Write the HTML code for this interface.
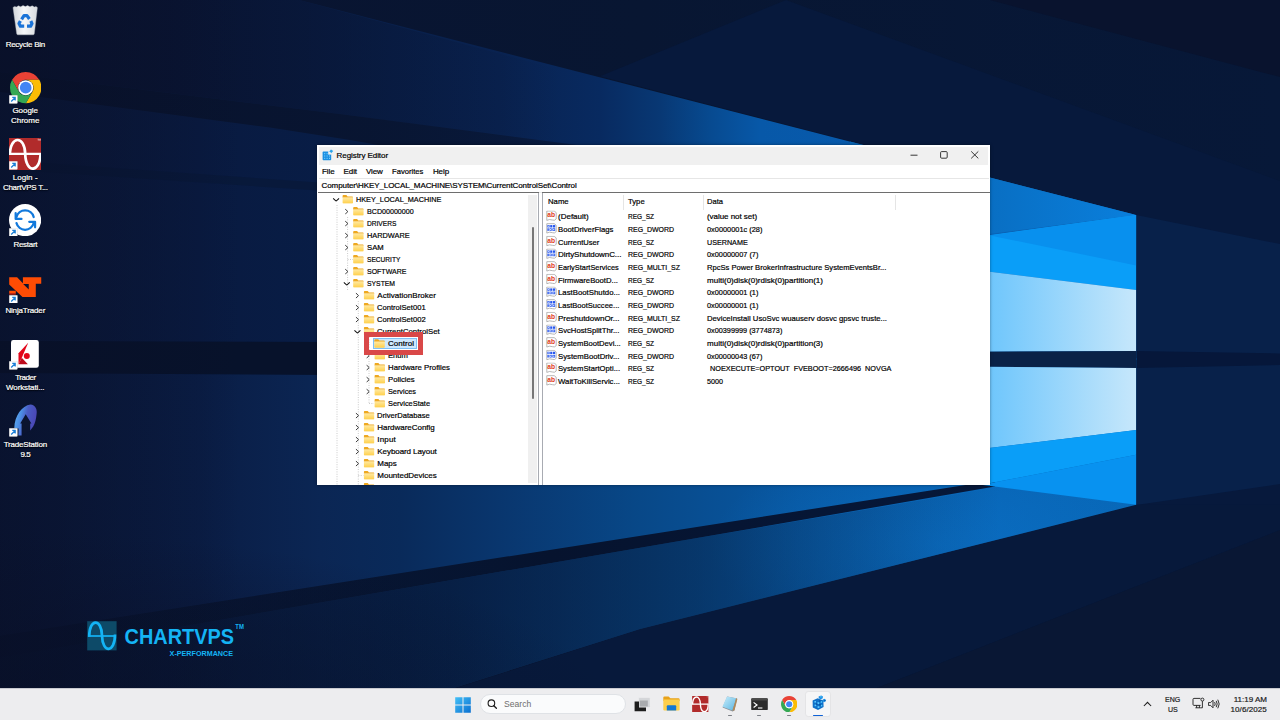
<!DOCTYPE html>
<html lang="en"><head><meta charset="utf-8"><title>Registry Editor</title>
<style>
html,body{margin:0;padding:0;background:#0a1430;}
body{width:1280px;height:720px;overflow:hidden;font-family:"Liberation Sans",sans-serif;}
#screen{position:relative;width:1280px;height:720px;overflow:hidden;background:#0a1430;}
.abs{position:absolute;}
#wall{position:absolute;left:0;top:0;}
.dicon{position:absolute;left:0;width:50px;text-align:center;color:#fff;font-size:8px;line-height:9.8px;text-shadow:0 1px 2px rgba(0,0,0,.9),0 0 2px rgba(0,0,0,.7);white-space:nowrap;}
.dicon span{display:block;}
.t{position:absolute;white-space:pre;color:#000;font-size:8px;line-height:10px;-webkit-text-stroke:0.2px currentColor;}
#win{position:absolute;left:317px;top:145px;width:673px;height:340px;background:#fff;overflow:hidden;border:0;box-shadow:0 0 3px rgba(0,0,0,.4);}
.dl{-webkit-text-stroke:0.2px #fff;position:absolute;white-space:nowrap;color:#fff;font-size:8px;line-height:10px;text-shadow:0 0.7px 1.2px rgba(0,0,0,.95),0 0 1.5px rgba(0,0,0,.8);}

</style></head>
<body>
<div id="screen">
<svg id="wall" width="1280" height="720" viewBox="0 0 1280 720">
<defs>
<linearGradient id="gbase" gradientUnits="userSpaceOnUse" x1="0" y1="0" x2="1280" y2="0"><stop offset="0" stop-color="#091330"/><stop offset="0.5" stop-color="#081632"/><stop offset="1" stop-color="#071838"/></linearGradient>
<linearGradient id="gupper" gradientUnits="userSpaceOnUse" x1="0" y1="0" x2="1136" y2="0"><stop offset="0.0000" stop-color="#0a193c"/><stop offset="0.1761" stop-color="#091a40"/><stop offset="0.2817" stop-color="#081d46"/><stop offset="0.4401" stop-color="#092250"/><stop offset="0.5282" stop-color="#082a60"/><stop offset="0.5810" stop-color="#083874"/><stop offset="0.6250" stop-color="#074a90"/><stop offset="0.6690" stop-color="#0758a8"/><stop offset="0.7570" stop-color="#085aac"/><stop offset="1.0000" stop-color="#0a6cc0"/></linearGradient>
<linearGradient id="glower" gradientUnits="userSpaceOnUse" x1="0" y1="0" x2="1136" y2="0"><stop offset="0.0000" stop-color="#0a193d"/><stop offset="0.1761" stop-color="#0a1d45"/><stop offset="0.2817" stop-color="#0b2654"/><stop offset="0.3521" stop-color="#092a5a"/><stop offset="0.4401" stop-color="#09366e"/><stop offset="0.5634" stop-color="#084888"/><stop offset="0.7042" stop-color="#0858a2"/><stop offset="0.8803" stop-color="#0864b4"/><stop offset="1.0000" stop-color="#0868b8"/></linearGradient>
<linearGradient id="gtri" gradientUnits="userSpaceOnUse" x1="900" y1="0" x2="1136" y2="0"><stop offset="0" stop-color="#0865b4"/><stop offset="1" stop-color="#0a7fdc"/></linearGradient>
<linearGradient id="glight" gradientUnits="userSpaceOnUse" x1="940" y1="0" x2="1136" y2="0"><stop offset="0" stop-color="#55bbfb"/><stop offset="0.3" stop-color="#74c8fc"/><stop offset="1" stop-color="#c6e7fb"/></linearGradient>
<linearGradient id="gdarkr" gradientUnits="userSpaceOnUse" x1="0" y1="0" x2="1280" y2="0"><stop offset="0" stop-color="#0a1836"/><stop offset="0.5" stop-color="#08193a"/><stop offset="1" stop-color="#07173a"/></linearGradient>
<linearGradient id="gtopfade" gradientUnits="userSpaceOnUse" x1="0" y1="0" x2="560" y2="0"><stop offset="0" stop-color="#091330" stop-opacity="1"/><stop offset="0.3" stop-color="#091330" stop-opacity="0.9"/><stop offset="1" stop-color="#091634" stop-opacity="0"/></linearGradient>
<linearGradient id="gstripe" gradientUnits="userSpaceOnUse" x1="0" y1="0" x2="600" y2="0"><stop offset="0" stop-color="#08122c" stop-opacity="1"/><stop offset="0.6" stop-color="#08142f" stop-opacity="0.9"/><stop offset="1" stop-color="#08142f" stop-opacity="0.5"/></linearGradient>
<linearGradient id="gblfade" gradientUnits="userSpaceOnUse" x1="0" y1="0" x2="1000" y2="0"><stop offset="0" stop-color="#071430" stop-opacity="0.5"/><stop offset="0.45" stop-color="#061532" stop-opacity="0.62"/><stop offset="0.7" stop-color="#061836" stop-opacity="0.42"/><stop offset="1" stop-color="#061836" stop-opacity="0"/></linearGradient>
<radialGradient id="gglow1" gradientUnits="userSpaceOnUse" cx="940" cy="545" r="230" gradientTransform="translate(940 545) scale(1 0.45) rotate(-14) translate(-940 -545)"><stop offset="0" stop-color="#0c74cc" stop-opacity="0.55"/><stop offset="1" stop-color="#0c74cc" stop-opacity="0"/></radialGradient>
<clipPath id="clow"><polygon points="0,358 1136.2,358 1136.2,504.8 640,629 454,688 300,740 0,740"/></clipPath>
<linearGradient id="gfstripe" gradientUnits="userSpaceOnUse" x1="0" y1="0" x2="1000" y2="0"><stop offset="0" stop-color="#061028" stop-opacity="0.5"/><stop offset="0.3" stop-color="#06112a" stop-opacity="0.8"/><stop offset="0.55" stop-color="#06132e" stop-opacity="1"/><stop offset="1" stop-color="#06183a" stop-opacity="1"/></linearGradient>
<linearGradient id="gvigl" gradientUnits="userSpaceOnUse" x1="0" y1="0" x2="240" y2="0"><stop offset="0" stop-color="#090f26" stop-opacity="0.62"/><stop offset="0.25" stop-color="#090f26" stop-opacity="0.5"/><stop offset="1" stop-color="#090f26" stop-opacity="0"/></linearGradient>
<radialGradient id="gvigb" gradientUnits="userSpaceOnUse" cx="0" cy="0" r="1" gradientTransform="translate(0 720) scale(620 190)"><stop offset="0" stop-color="#090f26" stop-opacity="0.55"/><stop offset="0.5" stop-color="#090f26" stop-opacity="0.35"/><stop offset="1" stop-color="#090f26" stop-opacity="0"/></radialGradient>
<clipPath id="cpane"><polygon points="850,141.49 1136.2,215 1136.2,504.8 850,467.88"/></clipPath>
</defs>
<rect width="1280" height="720" fill="url(#gbase)"/>
<polygon points="600,76.2774 786,0 1280,181 1280,560 1136.2,560 1136.2,215" fill="#07193c"/>
<polygon points="990,0 1280,0 1280,77" fill="#09132e"/>
<polygon points="1136.2,215 1280,244 1280,484 1136.2,505" fill="#08214a"/>
<polygon points="1136.2,351 1280,353.5 1280,365 1136.2,368" fill="#06173a"/>
<polygon points="1136.2,504.8 1280,504.8 1280,530 872,690 450,690 640,629" fill="#07193b"/>
<polygon points="1280,530 872,690 1280,690" fill="#091734"/>
<polygon points="0,-76.8322 1136.2,215 1136.2,360 0,360" fill="url(#gupper)"/>
<polygon points="0,358 1136.2,358 1136.2,504.8 640,629 454,688 300,740 0,740" fill="url(#glower)"/>
<rect x="600" y="400" width="540" height="300" fill="url(#gglow1)" clip-path="url(#clow)"/>
<polygon points="0,657.8 350,597.6 700,537.4 1000,487 1000,538.9 640,629 454,688 300,740 0,740" fill="url(#gblfade)"/>
<polygon points="0,-80 600,80.5 600,148 580,146 340,114 40,77 0,72" fill="url(#gtopfade)"/>
<polygon points="0,72 40,77 340,114 600,148 395,148 350,140 270,127.5 40,97 0,92" fill="url(#gstripe)"/>
<polygon points="0,160 340,184 340,192 0,169" fill="#091837" opacity="0.7"/>
<polygon points="0,341 330,342 330,375 0,373" fill="#07122b"/>
<polygon points="995,481 972,484 700,526.5 350,581 0,635.7 0,657.8 350,597.6 700,537.4 995,486.6" fill="url(#gfstripe)"/>
<rect x="0" y="0" width="240" height="720" fill="url(#gvigl)"/>
<rect x="0" y="520" width="640" height="200" fill="url(#gvigb)"/>
<g clip-path="url(#cpane)">
<polygon points="850,100 1136.2,215 850,252" fill="url(#gtri)"/>
<polygon points="940,242 1136.2,215 1136.2,290 940,265.5" fill="#0a9ef8"/>
<polygon points="990,235.5 1136.2,215 1136.2,265.4" fill="#0890ee"/>
<polygon points="940,265.5 1136.2,290 1136.2,351 940,352" fill="url(#glight)"/>
<polygon points="940,352 1136.2,351 1136.2,368 940,366.5" fill="#0a2247"/>
<polygon points="940,366.5 1136.2,368 1136.2,430 940,454" fill="url(#glight)"/>
<polygon points="940,454 1136.2,430 1136.2,454.7 940,493" fill="#0a9ef8"/>
<polygon points="940,493 1136.2,454.7 1136.2,520 940,520" fill="#0892f0"/>
</g>
</svg>
<svg class="abs" style="left:11px;top:4px" width="29" height="33" viewBox="0 0 29 33">
<defs><linearGradient id="gbin" x1="0" y1="0" x2="1" y2="0"><stop offset="0" stop-color="#d2d6da"/><stop offset="0.45" stop-color="#f6f7f9"/><stop offset="1" stop-color="#d6dade"/></linearGradient></defs>
<path d="M2 3.4L3.6 2.4L5.4 3L7.4 1.8L9.6 2.8L12 1.6L14.4 2.6L16.6 1.6L19 2.8L21.2 1.8L23.4 3L25 2.4L26.4 3.6L23.3 29.8Q23.2 30.8 22 30.8H7Q5.8 30.8 5.7 29.8Z" fill="url(#gbin)" stroke="#b9bec4" stroke-width="0.4"/>
<g fill="none" stroke="#1a73d8" stroke-width="3.2" stroke-linejoin="round"><path d="M10.6 15.4L13 11.6H16L18.4 15"/><path d="M19.8 17L21 19.6L19.6 22.2H16"/><path d="M13.2 22.2H9.4L8 19.6L9.4 17"/></g>
</svg>
<span class="dl" style="left:5.63px;top:39.50px;width:41.40px;letter-spacing:-0.258px">Recycle Bin</span>
<svg width="0" height="0" style="position:absolute"><defs><symbol id="chrome" viewBox="-50 -50 100 100">
<path d="M-43.3 -25A50 50 0 0 1 43.3 -25L0 -25A25 25 0 0 0 -21.65 12.5Z" fill="#e94235"/>
<path d="M43.3 -25A50 50 0 0 1 0 50L21.65 12.5A25 25 0 0 0 0 -25Z" fill="#fbbc05"/>
<path d="M0 50A50 50 0 0 1 -43.3 -25L-21.65 12.5A25 25 0 0 0 21.65 12.5Z" fill="#34a853"/>
<circle r="24" fill="#fff"/><circle r="18.6" fill="#4285f4"/></symbol></defs></svg>
<svg class="abs" style="left:9.6px;top:72.4px" width="31.4" height="31.4"><use href="#chrome" width="31.4" height="31.4"/></svg>
<svg class="abs" style="left:9.4px;top:95.1px" width="8.6" height="8.6" viewBox="0 0 9 9"><rect x="0.2" y="0.2" width="8.6" height="8.6" rx="0.6" fill="#fff" stroke="#c8c8c8" stroke-width="0.4"/><path d="M2.3 6.8L6 3.1M3.4 2.6H6.5V5.7" fill="none" stroke="#1b7fd6" stroke-width="1.3"/></svg>
<span class="dl" style="left:12.42px;top:105.50px;width:27.60px;letter-spacing:-0.033px">Google</span>
<span class="dl" style="left:10.89px;top:115.50px;width:30.60px;letter-spacing:0.025px">Chrome</span>
<svg width="0" height="0" style="position:absolute"><defs><symbol id="cvps" viewBox="0 0 32.2 32.2">
<rect width="32.2" height="32.2" fill="#b12b2b"/>
<path d="M0 15.85H32.2" stroke="#fff" stroke-width="2.4" fill="none"/>
<path d="M0.9 16.6C1.2 -2.75 15.8 -2.75 16.2 15.85C16.8 35.8 31.3 35.8 31.6 15" stroke="#fff" stroke-width="2.7" fill="none"/>
<path d="M28.6 1.2H30M29.3 1.2V2.8M30.6 2.8V1.2L31.3 2.2L32 1.2V2.8" stroke="#fff" stroke-width="0.4" fill="none"/>
</symbol></defs></svg>
<svg class="abs" style="left:9.2px;top:137.7px" width="32.2" height="32.2"><use href="#cvps" width="32.2" height="32.2"/></svg>
<svg class="abs" style="left:9.4px;top:161.1px" width="8.6" height="8.6" viewBox="0 0 9 9"><rect x="0.2" y="0.2" width="8.6" height="8.6" rx="0.6" fill="#fff" stroke="#c8c8c8" stroke-width="0.4"/><path d="M2.3 6.8L6 3.1M3.4 2.6H6.5V5.7" fill="none" stroke="#1b7fd6" stroke-width="1.3"/></svg>
<span class="dl" style="left:12.66px;top:172.50px;width:27.00px;letter-spacing:0.077px">Login -</span>
<span class="dl" style="left:2.94px;top:182.50px;width:46.80px;letter-spacing:-0.270px">ChartVPS T...</span>
<svg class="abs" style="left:9.2px;top:204.2px" width="32.2" height="32.2" viewBox="-50 -50 100 100">
<circle r="50" fill="#fff"/>
<g fill="none" stroke="#1279dc" stroke-width="6.9" stroke-linecap="round" stroke-linejoin="round"><path d="M26.7 -9.5A27.6 27.6 0 0 0 -26.7 -9.5"/><path d="M-26.7 9.5A27.6 27.6 0 0 0 26.7 9.5"/>
<path d="M-29.3 -21.6V-3.5H-11.2"/><path d="M31 22.4V5.2H12.9"/></g>
</svg>
<svg class="abs" style="left:9.4px;top:227.8px" width="8.6" height="8.6" viewBox="0 0 9 9"><rect x="0.2" y="0.2" width="8.6" height="8.6" rx="0.6" fill="#fff" stroke="#c8c8c8" stroke-width="0.4"/><path d="M2.3 6.8L6 3.1M3.4 2.6H6.5V5.7" fill="none" stroke="#1b7fd6" stroke-width="1.3"/></svg>
<span class="dl" style="left:13.38px;top:239.50px;width:25.90px;letter-spacing:-0.269px">Restart</span>
<svg class="abs" style="left:9px;top:277px" width="32.6" height="20.4" viewBox="0 0 32.6 20.4">
<path fill-rule="evenodd" d="M0.2 0.2H8.1L13.9 6.25V0.2H32.25V6.7H26.8V20H13.5L0.2 7.5ZM14.2 7H19.75V12.4Z" fill="#fe4c04"/>
<path d="M0.2 13.75H6.8V16.2H0.2Z" fill="#fe4c04"/><path d="M0.2 16.2H6.8V17.6H0.2Z" fill="#e02a10"/>
</svg>
<svg class="abs" style="left:9.4px;top:294.6px" width="8.6" height="8.6" viewBox="0 0 9 9"><rect x="0.2" y="0.2" width="8.6" height="8.6" rx="0.6" fill="#fff" stroke="#c8c8c8" stroke-width="0.4"/><path d="M2.3 6.8L6 3.1M3.4 2.6H6.5V5.7" fill="none" stroke="#1b7fd6" stroke-width="1.3"/></svg>
<span class="dl" style="left:5.38px;top:305.50px;width:41.80px;letter-spacing:-0.154px">NinjaTrader</span>
<svg class="abs" style="left:11.4px;top:340px" width="27.8" height="27.8" viewBox="0 0 27.8 27.8">
<rect width="27.8" height="27.8" rx="2.4" fill="#fff"/>
<path d="M17.2 2.8L7.5 13.3V24.2L10.8 17.8Z" fill="#e2061a"/>
<path d="M7.5 24.2L10.8 17.8L16.9 24.2Z" fill="#bd0a1c"/>
<circle cx="15.8" cy="16.1" r="3" fill="#e2061a"/>
</svg>
<svg class="abs" style="left:9.4px;top:361.1px" width="8.6" height="8.6" viewBox="0 0 9 9"><rect x="0.2" y="0.2" width="8.6" height="8.6" rx="0.6" fill="#fff" stroke="#c8c8c8" stroke-width="0.4"/><path d="M2.3 6.8L6 3.1M3.4 2.6H6.5V5.7" fill="none" stroke="#1b7fd6" stroke-width="1.3"/></svg>
<span class="dl" style="left:15.18px;top:372.50px;width:22.50px;letter-spacing:-0.461px">Trader</span>
<span class="dl" style="left:6.06px;top:382.50px;width:40.40px;letter-spacing:-0.121px">Workstati...</span>
<svg class="abs" style="left:13.6px;top:404.4px" width="24" height="32" viewBox="0 0 24 32">
<defs><linearGradient id="gts" x1="0" y1="0.2" x2="1" y2="0.5"><stop offset="0" stop-color="#5fb0f4"/><stop offset="0.3" stop-color="#4c8ee4"/><stop offset="0.55" stop-color="#4a5cc4"/><stop offset="1" stop-color="#4a44b4"/></linearGradient></defs>
<path d="M0.3 24C0.6 12 8 1.6 16.4 0.6C21.4 1 23.4 5.6 22.6 10C22.2 15 21 19.4 19.2 22.4L16.2 26.4V19H7.6V31.4H4.4L4.6 24.5Z" fill="url(#gts)"/>
<path d="M11.7 10.3L17.4 19.6H15.3V27L8.1 31.4V19.6H6.2Z" fill="#0b1430"/>
</svg>
<svg class="abs" style="left:9.4px;top:428px" width="8.6" height="8.6" viewBox="0 0 9 9"><rect x="0.2" y="0.2" width="8.6" height="8.6" rx="0.6" fill="#fff" stroke="#c8c8c8" stroke-width="0.4"/><path d="M2.3 6.8L6 3.1M3.4 2.6H6.5V5.7" fill="none" stroke="#1b7fd6" stroke-width="1.3"/></svg>
<span class="dl" style="left:3.64px;top:439.50px;width:45.30px;letter-spacing:-0.184px">TradeStation</span>
<span class="dl" style="left:20.39px;top:449.50px;width:12.00px;letter-spacing:-0.373px">9.5</span>
<svg class="abs" style="left:86px;top:620px" width="162" height="40" viewBox="86 620 162 40">
<rect x="87.2" y="621.2" width="29.4" height="29.2" fill="#0d4a68"/>
<path d="M88 636H116" stroke="#14b4f5" stroke-width="1.7" fill="none"/>
<path d="M89.2 636.8C89.2 618 101.6 618 102 635.6C102.4 653.4 115 653.4 115 634.6" stroke="#14b4f5" stroke-width="2.7" fill="none"/>
<text x="124.5" y="644.4" font-family="Liberation Sans, sans-serif" font-weight="bold" font-size="22.6" fill="#14b4f5" textLength="109.5" lengthAdjust="spacingAndGlyphs">CHARTVPS</text>
<text x="235.3" y="628.6" font-family="Liberation Sans, sans-serif" font-weight="bold" font-size="6.6" fill="#14b4f5" textLength="8.6" lengthAdjust="spacingAndGlyphs">TM</text>
<text x="169.6" y="655.6" font-family="Liberation Sans, sans-serif" font-weight="bold" font-size="6.8" fill="#14b4f5" textLength="63.4" lengthAdjust="spacingAndGlyphs">X-PERFORMANCE</text>
</svg>
<svg width="0" height="0" style="position:absolute"><defs>
<linearGradient id="gfold" x1="0" y1="0" x2="0" y2="1"><stop offset="0" stop-color="#ffe9a2"/><stop offset="1" stop-color="#ffcf48"/></linearGradient>
<symbol id="fold" viewBox="0 0 11 9"><path d="M0.3 1.2Q0.3 0.3 1.2 0.3H4.2L5.4 1.6H10Q10.8 1.6 10.8 2.4V3H0.3Z" fill="#eea820"/><path d="M0.3 2.6H10.8V8Q10.8 8.8 10 8.8H1.1Q0.3 8.8 0.3 8Z" fill="url(#gfold)"/></symbol>
<symbol id="chr" viewBox="0 0 4 6"><path d="M0.6 0.4L3.3 3L0.6 5.6" fill="none" stroke="#3a3a3a" stroke-width="1"/></symbol>
<symbol id="chd" viewBox="0 0 7 4"><path d="M0.5 0.5L3.5 3.3L6.5 0.5" fill="none" stroke="#111" stroke-width="1.1"/></symbol>
<symbol id="iab" viewBox="0 0 11 11"><path d="M0.8 0.6H8.2L10.2 2.2V8.6Q8.5 10.6 6.4 9.6Q3.5 8.4 0.8 10Z" fill="#fff" stroke="#9a9a9a" stroke-width="0.7"/><text x="1.2" y="6.9" font-family="Liberation Sans, sans-serif" font-size="6.4" font-weight="bold" fill="#e03a1a" textLength="7.8" lengthAdjust="spacingAndGlyphs">ab</text></symbol>
<symbol id="ibin" viewBox="0 0 11 11"><path d="M0.8 0.6H8.2L10.2 2.2V8.6Q8.5 10.6 6.4 9.6Q3.5 8.4 0.8 10Z" fill="#fff" stroke="#9a9a9a" stroke-width="0.7"/><g fill="#2656ee"><rect x="1.4" y="2" width="2.2" height="2.4"/><rect x="4.2" y="2" width="2.2" height="2.4"/><rect x="7" y="2" width="2.2" height="2.4"/><rect x="1.4" y="5.2" width="1.4" height="2.6"/><rect x="3.5" y="5.2" width="2.2" height="2.6"/><rect x="6.4" y="5.2" width="2.8" height="2.6"/></g><g fill="#fff"><rect x="2.1" y="2.7" width="0.8" height="1"/><rect x="4.2" y="5.9" width="0.8" height="1.2"/><rect x="7.3" y="5.9" width="1" height="1.2"/></g></symbol>
</defs></svg>
<div id="win"><div class="abs" style="left:2px;top:2px;width:669px;height:18px;background:#f0f0f0"></div></div>
<svg class="abs" style="left:322px;top:149px" width="12" height="12" viewBox="0 0 12 12"><rect x="0.6" y="2.6" width="8.6" height="8.6" rx="0.8" fill="#1a8fe3"/><g fill="#8fdcff"><rect x="2.2" y="4.2" width="1" height="1"/><rect x="4.6" y="4.2" width="1" height="1"/><rect x="2.2" y="6.5" width="1" height="1"/><rect x="4.6" y="6.5" width="1" height="1"/><rect x="7" y="6.5" width="1" height="1"/><rect x="2.2" y="8.8" width="1" height="1"/><rect x="4.6" y="8.8" width="1" height="1"/><rect x="7" y="8.8" width="1" height="1"/></g><rect x="6.2" y="2.2" width="3.4" height="3.4" fill="#f0f0f0"/><path d="M9 0.4L11.2 2L9.4 4L7.3 2.4Z" fill="#29a3ea"/></svg>
<span class="t" style="left:336.60px;top:150.50px;letter-spacing:-0.071px;">Registry Editor</span>
<svg class="abs" style="left:905px;top:147px" width="84" height="18" viewBox="905 147 84 18"><g fill="none" stroke="#222" stroke-width="0.9"><path d="M910.5 155.2H917.5"/><rect x="940.6" y="151.6" width="6.6" height="6.6" rx="1"/><path d="M971.2 151.4L978.3 158.4M978.3 151.4L971.2 158.4"/></g></svg>
<span class="t" style="left:322.00px;top:166.50px;letter-spacing:-0.048px;">File</span>
<span class="t" style="left:343.50px;top:166.50px;letter-spacing:-0.071px;">Edit</span>
<span class="t" style="left:366.00px;top:166.50px;letter-spacing:-0.099px;">View</span>
<span class="t" style="left:392.00px;top:166.50px;transform:scaleX(0.9515);transform-origin:0 0;">Favorites</span>
<span class="t" style="left:432.90px;top:166.50px;letter-spacing:-0.088px;">Help</span>
<div class="abs" style="left:319px;top:178px;width:670px;height:1px;background:#e6e6e6"></div>
<span class="t" style="left:321.60px;top:180.50px;letter-spacing:-0.100px;">Computer\HKEY_LOCAL_MACHINE\SYSTEM\CurrentControlSet\Control</span>
<div class="abs" style="left:318px;top:192px;width:672px;height:1px;background:#6e6e6e"></div>
<div class="abs" style="left:527.5px;top:195px;width:9.4px;height:287.5px;background:#f0f0f0"></div>
<div class="abs" style="left:532px;top:227px;width:2px;height:172px;background:#767676;border-radius:1px"></div>
<div class="abs" style="left:538.3px;top:193px;width:1.1px;height:292px;background:#a8abb2"></div>
<div class="abs" style="left:541.7px;top:193px;width:1.1px;height:292px;background:#a8abb2"></div>
<div class="abs" style="left:539.4px;top:192px;width:2.3px;height:1px;background:#e8e8e8"></div>
<svg class="abs" style="left:318px;top:193px" width="210" height="292" viewBox="318 193 210 292">
<g stroke="#b4b4b4" stroke-width="0.7" stroke-dasharray="1 1.4" fill="none">
<path d="M337 205V485"/><path d="M347.6 217V290"/><path d="M358.3 301V485"/><path d="M369 337V404"/>
<path d="M347.6 259.5H353"/><path d="M369 403.5H374"/><path d="M358.3 475.5H363.5"/>
</g>
<use href="#fold" x="342.20" y="194.80" width="11" height="9"/>
<use href="#chd" x="332.60" y="197.80" width="7" height="4"/>
<use href="#fold" x="352.87" y="206.80" width="11" height="9"/>
<use href="#chr" x="344.57" y="208.60" width="4" height="6"/>
<use href="#fold" x="352.87" y="218.80" width="11" height="9"/>
<use href="#chr" x="344.57" y="220.60" width="4" height="6"/>
<use href="#fold" x="352.87" y="230.80" width="11" height="9"/>
<use href="#chr" x="344.57" y="232.60" width="4" height="6"/>
<use href="#fold" x="352.87" y="242.80" width="11" height="9"/>
<use href="#chr" x="344.57" y="244.60" width="4" height="6"/>
<use href="#fold" x="352.87" y="254.80" width="11" height="9"/>
<use href="#fold" x="352.87" y="266.80" width="11" height="9"/>
<use href="#chr" x="344.57" y="268.60" width="4" height="6"/>
<use href="#fold" x="352.87" y="278.80" width="11" height="9"/>
<use href="#chd" x="343.27" y="281.80" width="7" height="4"/>
<use href="#fold" x="363.54" y="290.80" width="11" height="9"/>
<use href="#chr" x="355.24" y="292.60" width="4" height="6"/>
<use href="#fold" x="363.54" y="302.80" width="11" height="9"/>
<use href="#chr" x="355.24" y="304.60" width="4" height="6"/>
<use href="#fold" x="363.54" y="314.80" width="11" height="9"/>
<use href="#chr" x="355.24" y="316.60" width="4" height="6"/>
<use href="#fold" x="363.54" y="326.80" width="11" height="9"/>
<use href="#chd" x="353.94" y="329.80" width="7" height="4"/>
<use href="#fold" x="374.21" y="338.80" width="11" height="9"/>
<use href="#fold" x="374.21" y="350.80" width="11" height="9"/>
<use href="#chr" x="365.91" y="352.60" width="4" height="6"/>
<use href="#fold" x="374.21" y="362.80" width="11" height="9"/>
<use href="#chr" x="365.91" y="364.60" width="4" height="6"/>
<use href="#fold" x="374.21" y="374.80" width="11" height="9"/>
<use href="#chr" x="365.91" y="376.60" width="4" height="6"/>
<use href="#fold" x="374.21" y="386.80" width="11" height="9"/>
<use href="#chr" x="365.91" y="388.60" width="4" height="6"/>
<use href="#fold" x="374.21" y="398.80" width="11" height="9"/>
<use href="#fold" x="363.54" y="410.80" width="11" height="9"/>
<use href="#chr" x="355.24" y="412.60" width="4" height="6"/>
<use href="#fold" x="363.54" y="422.80" width="11" height="9"/>
<use href="#chr" x="355.24" y="424.60" width="4" height="6"/>
<use href="#fold" x="363.54" y="434.80" width="11" height="9"/>
<use href="#chr" x="355.24" y="436.60" width="4" height="6"/>
<use href="#fold" x="363.54" y="446.80" width="11" height="9"/>
<use href="#chr" x="355.24" y="448.60" width="4" height="6"/>
<use href="#fold" x="363.54" y="458.80" width="11" height="9"/>
<use href="#chr" x="355.24" y="460.60" width="4" height="6"/>
<use href="#fold" x="363.54" y="470.80" width="11" height="9"/>
<use href="#fold" x="363.54" y="482.80" width="11" height="9"/>
</svg>
<div class="abs" style="left:372.6px;top:338px;width:44.7px;height:11.3px;box-sizing:border-box;background:#cde8ff;border:1px solid #7fc0f5"></div>
<svg class="abs" style="left:374px;top:339px" width="11" height="9"><use href="#fold" width="11" height="9"/></svg>
<span class="t" style="left:356.00px;top:194.50px;transform:scaleX(0.9097);transform-origin:0 0;">HKEY_LOCAL_MACHINE</span>
<span class="t" style="left:366.67px;top:206.50px;transform:scaleX(0.8892);transform-origin:0 0;">BCD00000000</span>
<span class="t" style="left:366.67px;top:218.50px;transform:scaleX(0.8248);transform-origin:0 0;">DRIVERS</span>
<span class="t" style="left:366.67px;top:230.50px;transform:scaleX(0.9201);transform-origin:0 0;">HARDWARE</span>
<span class="t" style="left:366.67px;top:242.50px;transform:scaleX(0.9614);transform-origin:0 0;">SAM</span>
<span class="t" style="left:366.67px;top:254.50px;transform:scaleX(0.8241);transform-origin:0 0;">SECURITY</span>
<span class="t" style="left:366.67px;top:266.50px;transform:scaleX(0.8734);transform-origin:0 0;">SOFTWARE</span>
<span class="t" style="left:366.67px;top:278.50px;transform:scaleX(0.8512);transform-origin:0 0;">SYSTEM</span>
<span class="t" style="left:377.34px;top:290.50px;letter-spacing:0.026px;">ActivationBroker</span>
<span class="t" style="left:377.34px;top:302.50px;transform:scaleX(0.9516);transform-origin:0 0;">ControlSet001</span>
<span class="t" style="left:377.34px;top:314.50px;transform:scaleX(0.9516);transform-origin:0 0;">ControlSet002</span>
<span class="t" style="left:377.34px;top:326.50px;transform:scaleX(0.9720);transform-origin:0 0;">CurrentControlSet</span>
<span class="t" style="left:388.01px;top:338.50px;letter-spacing:0.030px;">Control</span>
<span class="t" style="left:388.01px;top:350.50px;transform:scaleX(0.9571);transform-origin:0 0;">Enum</span>
<span class="t" style="left:388.01px;top:362.50px;transform:scaleX(0.9752);transform-origin:0 0;">Hardware Profiles</span>
<span class="t" style="left:388.01px;top:374.50px;transform:scaleX(0.9674);transform-origin:0 0;">Policies</span>
<span class="t" style="left:388.01px;top:386.50px;transform:scaleX(0.9128);transform-origin:0 0;">Services</span>
<span class="t" style="left:388.01px;top:398.50px;transform:scaleX(0.9261);transform-origin:0 0;">ServiceState</span>
<span class="t" style="left:377.34px;top:410.50px;transform:scaleX(0.9477);transform-origin:0 0;">DriverDatabase</span>
<span class="t" style="left:377.34px;top:422.50px;letter-spacing:-0.033px;">HardwareConfig</span>
<span class="t" style="left:377.34px;top:434.50px;letter-spacing:0.175px;">Input</span>
<span class="t" style="left:377.34px;top:446.50px;letter-spacing:-0.077px;">Keyboard Layout</span>
<span class="t" style="left:377.34px;top:458.50px;letter-spacing:-0.057px;">Maps</span>
<span class="t" style="left:377.34px;top:470.50px;letter-spacing:-0.018px;">MountedDevices</span>
<div class="abs" style="left:364px;top:332.2px;width:59px;height:22.5px;box-sizing:border-box;border:5.3px solid #d94848"></div>
<span class="t" style="left:547.50px;top:196.50px;transform:scaleX(0.9685);transform-origin:0 0;">Name</span>
<span class="t" style="left:627.50px;top:196.50px;transform:scaleX(0.9610);transform-origin:0 0;">Type</span>
<span class="t" style="left:707.00px;top:196.50px;transform:scaleX(0.9469);transform-origin:0 0;">Data</span>
<div class="abs" style="left:623px;top:195px;width:1px;height:15px;background:#e5e5e5"></div>
<div class="abs" style="left:703px;top:195px;width:1px;height:15px;background:#e5e5e5"></div>
<div class="abs" style="left:895px;top:195px;width:1px;height:15px;background:#e5e5e5"></div>
<span class="t" style="left:558.00px;top:211.50px;letter-spacing:-0.001px;">(Default)</span>
<span class="t" style="left:627.50px;top:211.50px;transform:scaleX(0.8123);transform-origin:0 0;">REG_SZ</span>
<span class="t" style="left:707.00px;top:211.50px;letter-spacing:-0.046px;">(value not set)</span>
<span class="t" style="left:558.00px;top:224.50px;transform:scaleX(0.9649);transform-origin:0 0;">BootDriverFlags</span>
<span class="t" style="left:627.50px;top:224.50px;transform:scaleX(0.8697);transform-origin:0 0;">REG_DWORD</span>
<span class="t" style="left:707.00px;top:224.50px;transform:scaleX(0.9216);transform-origin:0 0;">0x0000001c (28)</span>
<span class="t" style="left:558.00px;top:237.50px;transform:scaleX(0.9488);transform-origin:0 0;">CurrentUser</span>
<span class="t" style="left:627.50px;top:237.50px;transform:scaleX(0.8123);transform-origin:0 0;">REG_SZ</span>
<span class="t" style="left:707.00px;top:237.50px;transform:scaleX(0.8969);transform-origin:0 0;">USERNAME</span>
<span class="t" style="left:558.00px;top:249.50px;letter-spacing:-0.067px;">DirtyShutdownC...</span>
<span class="t" style="left:627.50px;top:249.50px;transform:scaleX(0.8697);transform-origin:0 0;">REG_DWORD</span>
<span class="t" style="left:707.00px;top:249.50px;transform:scaleX(0.9161);transform-origin:0 0;">0x00000007 (7)</span>
<span class="t" style="left:558.00px;top:262.50px;transform:scaleX(0.9221);transform-origin:0 0;">EarlyStartServices</span>
<span class="t" style="left:627.50px;top:262.50px;transform:scaleX(0.8687);transform-origin:0 0;">REG_MULTI_SZ</span>
<span class="t" style="left:707.00px;top:262.50px;transform:scaleX(0.9491);transform-origin:0 0;">RpcSs Power BrokerInfrastructure SystemEventsBr...</span>
<span class="t" style="left:558.00px;top:275.50px;transform:scaleX(0.9641);transform-origin:0 0;">FirmwareBootD...</span>
<span class="t" style="left:627.50px;top:275.50px;transform:scaleX(0.8123);transform-origin:0 0;">REG_SZ</span>
<span class="t" style="left:707.00px;top:275.50px;letter-spacing:0.012px;">multi(0)disk(0)rdisk(0)partition(1)</span>
<span class="t" style="left:558.00px;top:287.50px;transform:scaleX(0.9749);transform-origin:0 0;">LastBootShutdo...</span>
<span class="t" style="left:627.50px;top:287.50px;transform:scaleX(0.8697);transform-origin:0 0;">REG_DWORD</span>
<span class="t" style="left:707.00px;top:287.50px;transform:scaleX(0.9161);transform-origin:0 0;">0x00000001 (1)</span>
<span class="t" style="left:558.00px;top:300.50px;transform:scaleX(0.9447);transform-origin:0 0;">LastBootSuccee...</span>
<span class="t" style="left:627.50px;top:300.50px;transform:scaleX(0.8697);transform-origin:0 0;">REG_DWORD</span>
<span class="t" style="left:707.00px;top:300.50px;transform:scaleX(0.9161);transform-origin:0 0;">0x00000001 (1)</span>
<span class="t" style="left:558.00px;top:313.50px;letter-spacing:-0.029px;">PreshutdownOr...</span>
<span class="t" style="left:627.50px;top:313.50px;transform:scaleX(0.8687);transform-origin:0 0;">REG_MULTI_SZ</span>
<span class="t" style="left:707.00px;top:313.50px;transform:scaleX(0.9640);transform-origin:0 0;">DeviceInstall UsoSvc wuauserv dosvc gpsvc truste...</span>
<span class="t" style="left:558.00px;top:325.50px;transform:scaleX(0.9648);transform-origin:0 0;">SvcHostSplitThr...</span>
<span class="t" style="left:627.50px;top:325.50px;transform:scaleX(0.8697);transform-origin:0 0;">REG_DWORD</span>
<span class="t" style="left:707.00px;top:325.50px;transform:scaleX(0.9106);transform-origin:0 0;">0x00399999 (3774873)</span>
<span class="t" style="left:558.00px;top:338.50px;transform:scaleX(0.9524);transform-origin:0 0;">SystemBootDevi...</span>
<span class="t" style="left:627.50px;top:338.50px;transform:scaleX(0.8123);transform-origin:0 0;">REG_SZ</span>
<span class="t" style="left:707.00px;top:338.50px;letter-spacing:0.012px;">multi(0)disk(0)rdisk(0)partition(3)</span>
<span class="t" style="left:558.00px;top:351.50px;transform:scaleX(0.9671);transform-origin:0 0;">SystemBootDriv...</span>
<span class="t" style="left:627.50px;top:351.50px;transform:scaleX(0.8697);transform-origin:0 0;">REG_DWORD</span>
<span class="t" style="left:707.00px;top:351.50px;transform:scaleX(0.9148);transform-origin:0 0;">0x00000043 (67)</span>
<span class="t" style="left:558.00px;top:363.50px;transform:scaleX(0.9553);transform-origin:0 0;">SystemStartOpti...</span>
<span class="t" style="left:627.50px;top:363.50px;transform:scaleX(0.8123);transform-origin:0 0;">REG_SZ</span>
<span class="t" style="left:709.70px;top:363.50px;transform:scaleX(0.9101);transform-origin:0 0;">NOEXECUTE=OPTOUT  FVEBOOT=2666496  NOVGA</span>
<span class="t" style="left:558.00px;top:376.50px;transform:scaleX(0.9731);transform-origin:0 0;">WaitToKillServic...</span>
<span class="t" style="left:627.50px;top:376.50px;transform:scaleX(0.8123);transform-origin:0 0;">REG_SZ</span>
<span class="t" style="left:707.00px;top:376.50px;transform:scaleX(0.8991);transform-origin:0 0;">5000</span>
<svg class="abs" style="left:545px;top:208px" width="13" height="180" viewBox="545 208 13 180">
<use href="#iab" x="546" y="210.40" width="11" height="11"/>
<use href="#ibin" x="546" y="223.07" width="11" height="11"/>
<use href="#iab" x="546" y="235.73" width="11" height="11"/>
<use href="#ibin" x="546" y="248.40" width="11" height="11"/>
<use href="#iab" x="546" y="261.07" width="11" height="11"/>
<use href="#iab" x="546" y="273.74" width="11" height="11"/>
<use href="#ibin" x="546" y="286.40" width="11" height="11"/>
<use href="#ibin" x="546" y="299.07" width="11" height="11"/>
<use href="#iab" x="546" y="311.74" width="11" height="11"/>
<use href="#ibin" x="546" y="324.40" width="11" height="11"/>
<use href="#iab" x="546" y="337.07" width="11" height="11"/>
<use href="#ibin" x="546" y="349.74" width="11" height="11"/>
<use href="#iab" x="546" y="362.40" width="11" height="11"/>
<use href="#iab" x="546" y="375.07" width="11" height="11"/>
</svg>
<div class="abs" style="left:0;top:688px;width:1280px;height:32px;background:#ededef;border-top:1px solid #c9cad0;box-sizing:border-box"></div>
<svg class="abs" style="left:455px;top:696.5px" width="16" height="16" viewBox="0 0 16 16">
<defs><linearGradient id="gst" x1="0" y1="0" x2="1" y2="1"><stop offset="0" stop-color="#43c0f7"/><stop offset="1" stop-color="#0a6fd0"/></linearGradient></defs>
<path d="M0.2 0.2H7.5V7.5H0.2ZM8.5 0.2H15.8V7.5H8.5ZM0.2 8.5H7.5V15.8H0.2ZM8.5 8.5H15.8V15.8H8.5Z" fill="url(#gst)"/></svg>
<div class="abs" style="left:480px;top:693.7px;width:145.6px;height:20.6px;box-sizing:border-box;border-radius:10.3px;background:#fafbfc;border:1px solid #dfe2e6"></div>
<svg class="abs" style="left:486px;top:698px" width="12" height="12" viewBox="0 0 12 12"><circle cx="5.4" cy="5.2" r="3.3" fill="none" stroke="#1c1c1c" stroke-width="1.1"/><path d="M7.8 7.7L10.4 10.3" stroke="#1c1c1c" stroke-width="1.3" stroke-linecap="round"/></svg>
<span class="t" style="left:503.90px;top:698.00px;font-size:9.3px;line-height:12px;transform:scaleX(0.9231);transform-origin:0 0;color:#6e6e6e;-webkit-text-stroke:0;">Search</span>
<svg class="abs" style="left:633.5px;top:696.5px" width="17" height="15" viewBox="0 0 17 15"><rect x="4.6" y="0.6" width="11.6" height="10" rx="1" fill="#d4d6d9" stroke="#f4f4f4" stroke-width="0.5"/><rect x="5.8" y="3.5" width="8" height="6" fill="#a9abae"/><path d="M0.6 4.6H5V10.6H12V14.2H0.6Z" fill="#1d1d1d"/></svg>
<svg class="abs" style="left:663px;top:696.4px" width="17" height="15" viewBox="0 0 17 15">
<path d="M0.3 1.6Q0.3 0.4 1.5 0.4H5.6L7.4 2.2H15.4Q16.6 2.2 16.6 3.4V5H0.3Z" fill="#e8a21a"/>
<path d="M0.3 3.6H16.6V13.2Q16.6 14.4 15.4 14.4H1.5Q0.3 14.4 0.3 13.2Z" fill="#fdcf4d"/>
<path d="M3.8 10.2Q3.8 9.2 4.8 9.2H12.2Q13.2 9.2 13.2 10.2V14.4H3.8Z" fill="#1478d4"/></svg>
<svg class="abs" style="left:692.4px;top:695.8px" width="16.7" height="16.4"><use href="#cvps" width="16.7" height="16.4"/></svg>
<svg class="abs" style="left:722px;top:696.4px" width="16" height="16" viewBox="0 0 16 16">
<defs><linearGradient id="gnp" x1="0" y1="0" x2="1" y2="1"><stop offset="0" stop-color="#c9eefc"/><stop offset="1" stop-color="#5ab4e0"/></linearGradient></defs>
<path d="M5.2 0.6L15.2 2.6L12.4 14.4L10.6 15.4L0.6 11.4Z" fill="#8d8f94"/>
<path d="M5 0.4L14.2 2.2L10.4 14.6L0.4 10.8Z" fill="url(#gnp)"/>
<path d="M14.2 2.2L15.4 3L12.4 14.4L10.4 14.6Z" fill="#b08a5a"/></svg>
<div class="abs" style="left:728.4px;top:714.8px;width:3.8px;height:1.5px;border-radius:1px;background:#7c7f85"></div>
<svg class="abs" style="left:750.8px;top:697.6px" width="17" height="12.6" viewBox="0 0 17 12.6">
<rect x="0.2" y="0.2" width="16.6" height="12.2" rx="1.4" fill="#2c2c2c"/><rect x="0.2" y="0.2" width="16.6" height="2.2" rx="1" fill="#4a4a4a"/>
<path d="M2.6 4.4L6 7L2.6 9.6" fill="none" stroke="#fff" stroke-width="1.2"/><path d="M7 10H11.4" stroke="#fff" stroke-width="1.1"/></svg>
<div class="abs" style="left:757.3px;top:714.8px;width:3.8px;height:1.5px;border-radius:1px;background:#7c7f85"></div>
<svg class="abs" style="left:780.5px;top:695.8px" width="16.4" height="16.4"><use href="#chrome" width="16.4" height="16.4"/></svg>
<div class="abs" style="left:786.8px;top:714.8px;width:3.8px;height:1.5px;border-radius:1px;background:#7c7f85"></div>
<div class="abs" style="left:805.1px;top:691.1px;width:26px;height:25.8px;box-sizing:border-box;border-radius:3.2px;background:#f6f6f7;border:0.7px solid #e4e4e6"></div>
<svg class="abs" style="left:811.6px;top:695.4px" width="15.2" height="16.4" viewBox="0 0 15.2 16.4">
<g fill="#0f70c8"><path d="M0.6 5.6L5.6 3.2L11.4 5.4L11.6 12L6 15L0.8 12.4Z"/></g>
<g fill="#1c8fe4"><path d="M6.6 1.6L9.2 0.4L11 1.6L10.6 3.4L8.4 4.2L6.8 3.2Z"/><path d="M10.8 4.6L12.6 3.8L14 5L13.6 6.6L12 7.2L10.8 6.2Z"/></g>
<g fill="#56c8ff"><rect x="2.4" y="6" width="1.6" height="1.6"/><rect x="5.4" y="7.2" width="1.8" height="1.8"/><rect x="8.6" y="6.2" width="1.6" height="1.6"/><rect x="2.6" y="9.6" width="1.6" height="1.6"/><rect x="5.6" y="11.2" width="1.8" height="1.8"/><rect x="8.8" y="9.8" width="1.5" height="1.6"/><rect x="8.2" y="1.2" width="1.4" height="1.2"/></g>
<g fill="#084a9a"><rect x="4.2" y="8.4" width="1.2" height="1.4"/><rect x="7.4" y="9" width="1.2" height="1.6"/><rect x="7.2" y="5.4" width="1.2" height="1.2"/><rect x="12.4" y="5" width="1" height="1"/></g></svg>
<div class="abs" style="left:812.6px;top:714.6px;width:10.6px;height:1.9px;border-radius:1px;background:#0f62d6"></div>
<svg class="abs" style="left:1143px;top:700.6px" width="9" height="6" viewBox="0 0 9 6"><path d="M0.9 5L4.5 1.3L8.1 5" fill="none" stroke="#1c1c1c" stroke-width="1.05"/></svg>
<span class="t" style="left:1164.90px;top:694.50px;transform:scaleX(0.8825);transform-origin:0 0;color:#1c1c1c;">ENG</span>
<span class="t" style="left:1167.70px;top:704.50px;transform:scaleX(0.8818);transform-origin:0 0;color:#1c1c1c;">US</span>
<svg class="abs" style="left:1191.6px;top:697.4px" width="13" height="12" viewBox="0 0 13 12"><g fill="none" stroke="#1c1c1c" stroke-width="0.9">
<path d="M8.4 1.4H2Q1 1.4 1 2.4V7.4Q1 8.4 2 8.4H8.6"/><path d="M3.4 10.8H8.4M4.6 8.4V10.8M7.4 8.4V10.8"/><circle cx="10.4" cy="2.6" r="1.5"/><path d="M10.4 4.2V10.8H8.4"/></g></svg>
<svg class="abs" style="left:1208px;top:698.6px" width="13" height="10" viewBox="0 0 13 10"><g fill="none" stroke="#1c1c1c" stroke-width="0.9" stroke-linecap="round">
<path d="M0.8 3.6H2.6L5 1.2V8.8L2.6 6.4H0.8Z" stroke-linejoin="round"/><path d="M6.8 3.4Q7.8 5 6.8 6.6"/><path d="M8.4 2.2Q10.2 5 8.4 7.8"/><path d="M10 1Q12.6 5 10 9"/></g></svg>
<span class="t" style="left:1233.70px;top:694.50px;letter-spacing:-0.001px;color:#1c1c1c;">11:19 AM</span>
<span class="t" style="left:1230.50px;top:704.50px;letter-spacing:0.090px;color:#1c1c1c;">10/6/2025</span>
</div>
</body></html>
